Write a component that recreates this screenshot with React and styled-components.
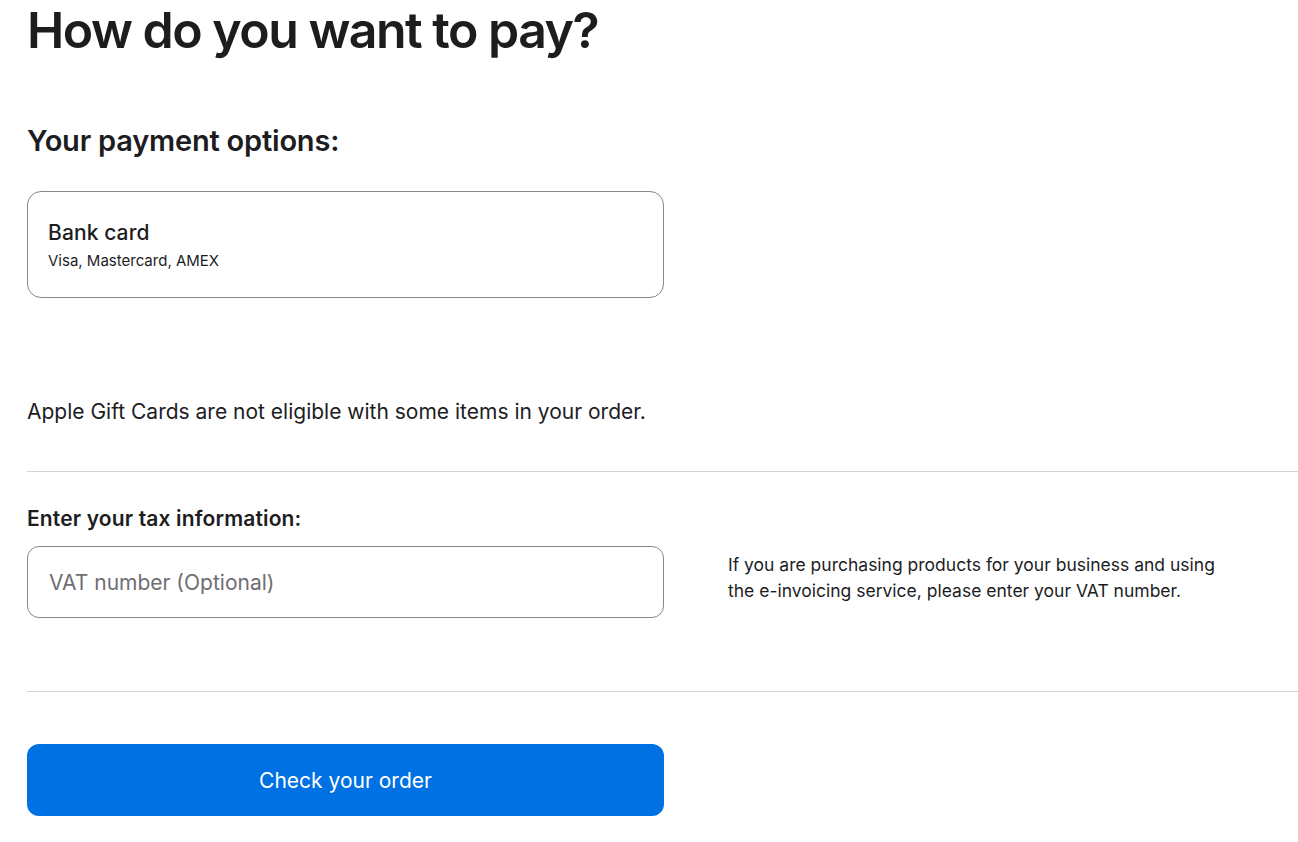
import styled, { createGlobalStyle } from "styled-components";

const GlobalStyle = createGlobalStyle`
  body {
    margin: 0;
    background: #ffffff;
    color: #1d1d1f;
    font-family: Inter, "Noto Sans", "Liberation Sans", sans-serif;
    -webkit-font-smoothing: antialiased;
  }
`;

const Page = styled.main`
  padding: 0 0 40px 27px;
  display: flex;
  flex-direction: column;
`;

const Title = styled.h1`
  margin: 0;
  font-size: 50px;
  line-height: 60px;
  font-weight: 600;
  letter-spacing: -1.5px;
`;

const SectionTitle = styled.h2`
  margin: 64px 0 33px;
  font-size: 29px;
  line-height: 34px;
  font-weight: 600;
  letter-spacing: -0.2px;
`;

const Column = styled.div`
  width: 637px;
  box-sizing: border-box;
`;

const OptionCard = styled.button`
  width: 637px;
  height: 107px;
  box-sizing: border-box;
  display: flex;
  flex-direction: column;
  justify-content: center;
  align-items: flex-start;
  gap: 6px;
  padding: 2px 20px 0;
  background: #ffffff;
  border: 1px solid #86868b;
  border-radius: 14px;
  font-family: inherit;
  color: inherit;
  text-align: left;
  cursor: pointer;
`;

const OptionName = styled.span`
  font-size: 21px;
  line-height: 25px;
  font-weight: 500;
  letter-spacing: 0.1px;
`;

const OptionDesc = styled.span`
  font-size: 15px;
  line-height: 20px;
  font-weight: 400;
`;

const Notice = styled.p`
  margin: 101px 0 0;
  font-size: 21px;
  line-height: 26px;
`;

const Divider = styled.hr`
  margin: ${({ $top }) => $top}px 0 0;
  border: none;
  border-top: 1px solid #d2d2d7;
  height: 0;
`;

const Label = styled.label`
  display: block;
  margin: 34px 0 14px;
  font-size: 21px;
  line-height: 26px;
  font-weight: 600;
  letter-spacing: 0.15px;
`;

const TaxRow = styled.div`
  display: grid;
  grid-template-columns: 637px 500px;
  column-gap: 64px;
  align-items: center;
`;

const Input = styled.input`
  width: 637px;
  height: 72px;
  box-sizing: border-box;
  padding: 0 21px;
  border: 1px solid #86868b;
  border-radius: 12px;
  font-family: inherit;
  font-size: 21px;
  color: #1d1d1f;
  outline: none;
  &::placeholder {
    color: #6e6e73;
  }
`;

const Note = styled.p`
  margin: 0 0 8px;
  font-size: 17.5px;
  line-height: 26px;
`;

const PrimaryButton = styled.button`
  margin-top: 52px;
  width: 637px;
  height: 72px;
  border: none;
  border-radius: 12px;
  background: #0071e3;
  color: #ffffff;
  font-family: inherit;
  font-size: 21px;
  font-weight: 400;
  cursor: pointer;
`;

export default function App() {
  return (
    <>
      <GlobalStyle />
      <Page>
        <Title>How do you want to pay?</Title>
        <SectionTitle>Your payment options:</SectionTitle>
        <Column>
          <OptionCard type="button">
            <OptionName>Bank card</OptionName>
            <OptionDesc>Visa, Mastercard, AMEX</OptionDesc>
          </OptionCard>
        </Column>
        <Notice>Apple Gift Cards are not eligible with some items in your order.</Notice>
        <Divider $top={46} />
        <Label htmlFor="vat">Enter your tax information:</Label>
        <TaxRow>
          <Input id="vat" placeholder="VAT number (Optional)" />
          <Note>
            If you are purchasing products for your business and using the
            e-invoicing service, please enter your VAT number.
          </Note>
        </TaxRow>
        <Divider $top={73} />
        <PrimaryButton type="button">Check your order</PrimaryButton>
      </Page>
    </>
  );
}
